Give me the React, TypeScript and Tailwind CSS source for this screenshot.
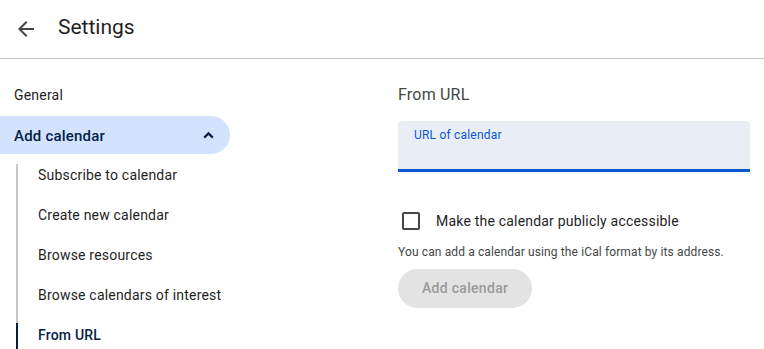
import { useState } from 'react';

const subItems = [
  'Subscribe to calendar',
  'Create new calendar',
  'Browse resources',
  'Browse calendars of interest',
  'From URL',
];

export default function App() {
  const [isPublic, setIsPublic] = useState(false);
  const [url, setUrl] = useState('');
  const active = 'From URL';

  return (
    <div className="w-[764px] h-[349px] overflow-hidden bg-white font-['Roboto',sans-serif] text-[#1f1f1f] tracking-[0.2px]">
      <header className="h-[59px] flex items-center border-b border-[#c7c7c7]">
        <button className="ml-[14px] w-[24px] h-[24px] flex items-center justify-center text-[#444746]">
          <svg width="24" height="24" viewBox="0 0 24 24" fill="currentColor">
            <path d="M20 11H7.83l5.59-5.59L12 4l-8 8 8 8 1.41-1.41L7.83 13H20v-2z" />
          </svg>
        </button>
        <h1 className="ml-[20px] text-[21px] text-[#1f1f1f] -mt-[2px] tracking-normal">Settings</h1>
      </header>

      <div className="flex pt-[16px]">
        <nav className="w-[398px] shrink-0">
          <div className="h-[40px] flex items-center pl-[14px] text-[14px] text-[#1f1f1f]">General</div>
          <div className="mt-[1px] w-[230px] h-[38px] flex items-center justify-between pl-[14px] pr-[10px] bg-[#d3e3fd] rounded-r-full text-[15px] font-medium text-[#041e49]">
            <span className="pt-[2px]">Add calendar</span>
            <svg width="24" height="24" viewBox="0 0 24 24" fill="none" stroke="currentColor" strokeWidth="2.2">
              <path d="M8.2 14.6 12.5 10.4 16.8 14.6" />
            </svg>
          </div>
          <ul>
            {subItems.map((item, i) => (
              <li key={item} className="h-[40px] flex">
                <div className="ml-[16px] w-[2px] flex flex-col">
                  {i === 0 && <div className="h-[10px]" />}
                  {item === active ? (
                    <>
                      <div className="h-[9px] bg-[#c4c7c5]" />
                      <div className="flex-1 bg-[#041e49]" />
                    </>
                  ) : (
                    <div className="flex-1 bg-[#c4c7c5]" />
                  )}
                </div>
                <a
                  className={
                    item === active
                      ? 'ml-[20px] pt-[3px] flex items-center text-[14px] font-medium text-[#041e49]'
                      : 'ml-[20px] pt-[3px] flex items-center text-[14px] text-[#1f1f1f]'
                  }
                >
                  {item}
                </a>
              </li>
            ))}
          </ul>
        </nav>

        <main className="flex-1 pr-[14px]">
          <h2 className="h-[40px] flex items-center text-[16px] text-[#444746]">From URL</h2>
          <label className="mt-[6px] block h-[51px] bg-[#e9eef6] rounded-t-[4px] border-b-[3px] border-[#0b57d0] relative">
            <span className="absolute left-[16px] top-[5px] text-[12px] text-[#0b57d0]">URL of calendar</span>
            <input
              value={url}
              onChange={(e) => setUrl(e.target.value)}
              className="absolute left-[16px] right-[16px] bottom-[4px] h-[24px] bg-transparent outline-none text-[14px]"
            />
          </label>

          <div className="mt-[37px] flex items-center h-[24px]">
            <button
              onClick={() => setIsPublic(!isPublic)}
              className={
                isPublic
                  ? 'ml-[4px] w-[18px] h-[18px] rounded-[2px] bg-[#0b57d0] border-2 border-[#0b57d0]'
                  : 'ml-[4px] w-[18px] h-[18px] rounded-[2px] border-2 border-[#444746]'
              }
            />
            <span className="ml-[16px] text-[14px] text-[#1f1f1f]">Make the calendar publicly accessible</span>
          </div>
          <p className="mt-[10px] text-[12px] text-[#444746] tracking-[0.12px]">
            You can add a calendar using the iCal format by its address.
          </p>
          <button
            disabled
            className="mt-[8px] h-[39px] px-[24px] rounded-full bg-[#e3e3e3] text-[14px] font-medium text-[#9a9a9a] tracking-[0.3px]"
          >
            Add calendar
          </button>
        </main>
      </div>
    </div>
  );
}
